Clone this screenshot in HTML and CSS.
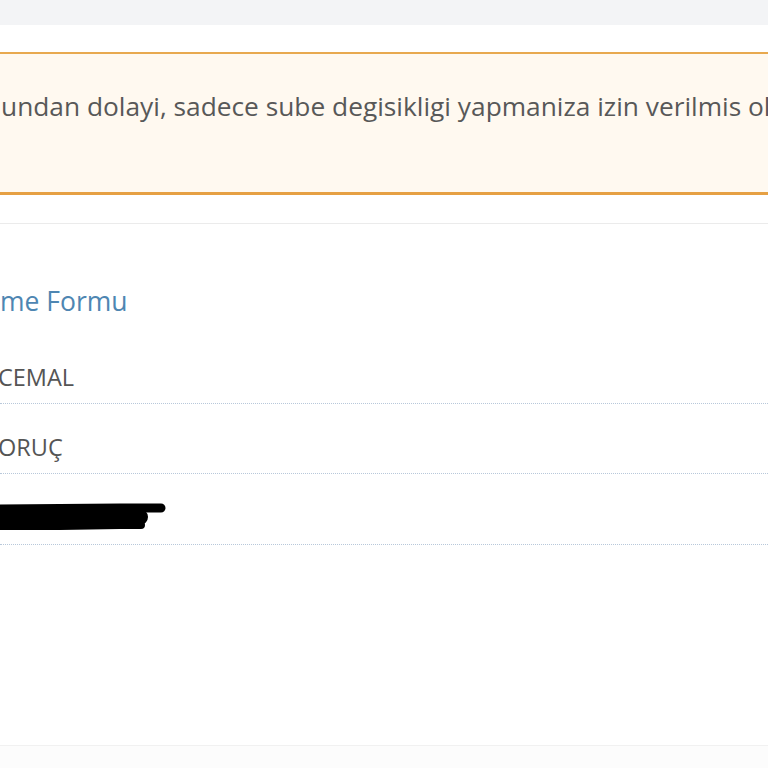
FILE: index.html
```html
<!DOCTYPE html>
<html lang="tr">
<head>
<meta charset="utf-8">
<title>Form</title>
<link rel="stylesheet" href="styles.css">
</head>
<body>
<div class="topbar"></div>
<main class="page">
  <div class="alert">
    <p class="alert-text">undan dolayi, sadece sube degisikligi yapmaniza izin verilmis olup</p>
  </div>
  <section class="panel">
    <h2 class="panel-title">me Formu</h2>
    <div class="row"><span class="value">CEMAL</span></div>
    <div class="row"><span class="value">ORUÇ</span></div>
    <div class="row">
      <svg class="scribble" width="170" height="30" viewBox="0 0 170 30">
        <path d="M-5 6 L60 5.5 L120 5 L161 5" stroke="#000" stroke-width="9" fill="none" stroke-linecap="round"/>
        <path d="M-5 16 L60 15 L110 15 L140 14" stroke="#000" stroke-width="16" fill="none" stroke-linecap="round"/>
        <path d="M-5 23 L60 23 L120 22 L141 22" stroke="#000" stroke-width="8" fill="none" stroke-linecap="round"/>
      </svg>
    </div>
  </section>
  <footer class="footer"></footer>
</main>
</body>
</html>
```

FILE: styles.css
```css
html, body {
  margin: 0;
  padding: 0;
  background: #ffffff;
  font-family: "Open Sans", "Noto Sans", sans-serif;
  color: #555555;
}
.topbar {
  height: 25px;
  background: #f3f4f6;
}
.page {
  padding-top: 27px;
}
.alert {
  background: #fff9f0;
  border-top: 2px solid #e8a94f;
  border-bottom: 3px solid #e6a043;
  height: 138px;
  box-sizing: content-box;
  overflow: hidden;
}
.alert-text {
  margin: 0;
  padding: 34px 0 0 1px;
  font-size: 26.3px;
  line-height: 36px;
  white-space: nowrap;
  color: #585858;
}
.panel {
  margin-top: 28px;
  border-top: 1px solid #ebebeb;
  padding-top: 59px;
  height: 522px;
  box-sizing: border-box;
}
.panel-title {
  margin: 0 0 14px 0;
  font-size: 26.5px;
  font-weight: 400;
  line-height: 36px;
  color: #4e86b2;
}
.row {
  height: 70.5px;
  border-bottom: 1px dotted #b8c8da;
  display: flex;
  align-items: flex-end;
  padding-bottom: 11px;
  box-sizing: border-box;
  font-size: 23.5px;
  line-height: 30px;
}
.value {
  color: #555555;
  margin-left: -2px;
}
.scribble {
  display: block;
}
.footer {
  border-top: 1px solid #f1f1f1;
  background: #fcfcfc;
  height: 30px;
}
```
